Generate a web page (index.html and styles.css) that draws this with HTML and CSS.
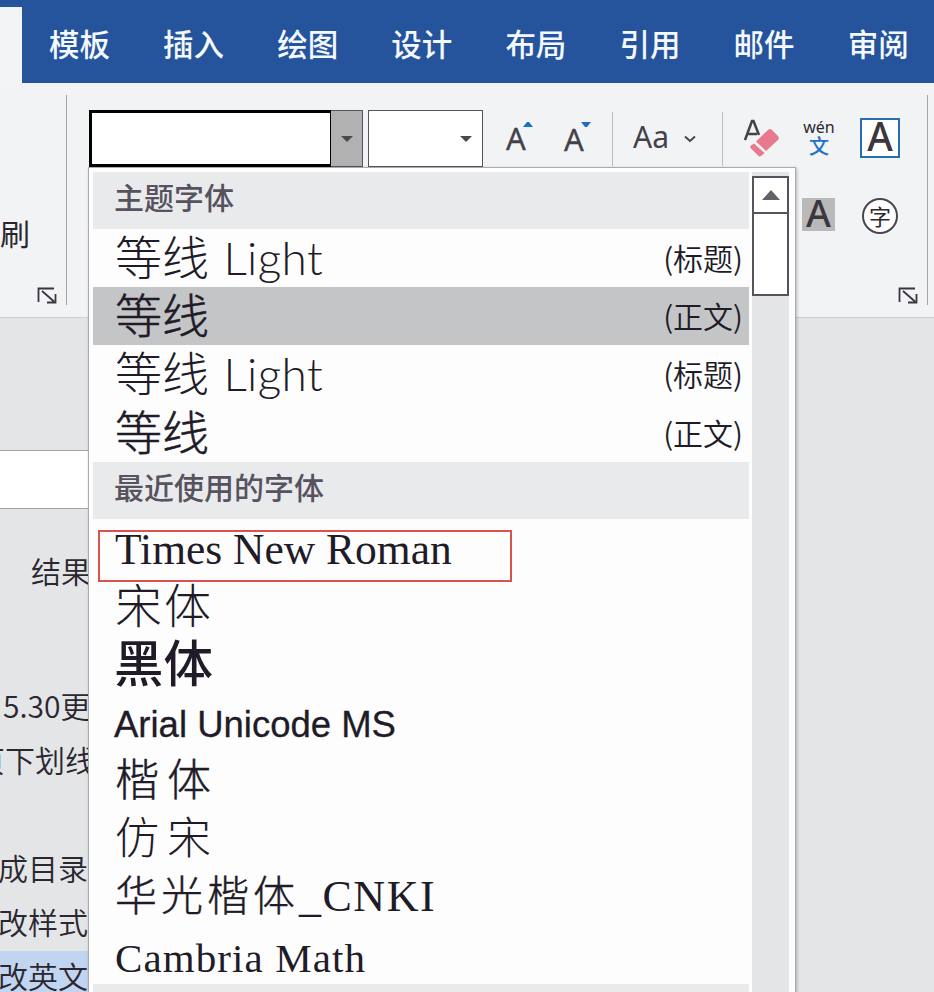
FILE: index.html
```html
<!DOCTYPE html>
<html lang="zh-CN">
<head>
  <meta charset="UTF-8">
  <meta name="viewport" content="width=device-width, initial-scale=1">
  <title>字体</title>
  <link rel="stylesheet" href="styles.css">
</head>
<body>
  <nav class="tabs">
    <div class="active-tab"></div>
    <span>模板</span>
    <span>插入</span>
    <span>绘图</span>
    <span>设计</span>
    <span>布局</span>
    <span>引用</span>
    <span>邮件</span>
    <span>审阅</span>
  </nav>

  <div class="ribbon">
    <div class="group clipboard">
      <span class="brush">刷</span>
      <svg class="launcher" width="20" height="17" viewBox="0 0 20 17"><path d="M1.500 15V1.500H17M5 4L17 14.500M18.500 7V15.500H10"/></svg>
    </div>
    <div class="group font">
      <div class="tools">
        <div class="combo name">
          <div class="field"></div>
          <div class="arrow"><svg width="12" height="6"><path d="M0 0H12L6 6Z"/></svg></div>
        </div>
        <div class="combo size"><svg width="12" height="6"><path d="M0 0H12L6 6Z"/></svg></div>
        <div class="letter grow">A<svg width="10" height="5"><path d="M0 5L4 0H6L10 5Z"/></svg></div>
        <div class="letter shrink">A<svg width="10" height="5"><path d="M0 0H10L6 5H4Z"/></svg></div>
        <div class="line"></div>
        <div class="case">Aa</div>
        <svg class="chevron" width="12" height="8" viewBox="0 0 12 8"><path d="M1 1.500L6 6L11 1.500"/></svg>
        <div class="line second"></div>
        <svg class="eraser" width="36" height="40" viewBox="0 0 36 40">
          <path class="a" d="M1 21L8 2H9.500L15 16M4 15H13"/>
          <path class="pink" d="M12 22.500L24 11Q26 9 28 11L34 17Q35.500 19 34 21L22 32Z"/>
          <path class="pink" d="M10 24.500L20.500 34L17 37Q15.500 38 14 36.500L7 29.500Q5.500 28 7 26.500Z"/>
        </svg>
        <div class="pinyin"><span>wén</span><b>文</b></div>
        <div class="boxed">A</div>
      </div>
      <div class="tools lower">
        <div class="shaded">A</div>
        <div class="circled">字</div>
      </div>
      <svg class="launcher" width="20" height="17" viewBox="0 0 20 17"><path d="M1.500 15V1.500H17M5 4L17 14.500M18.500 7V15.500H10"/></svg>
    </div>
  </div>

  <div class="work">
    <div class="search"></div>
    <div class="outline">
      <p class="result">结果</p>
      <p class="date">5.30更</p>
      <p class="under">页下划线</p>
      <p class="toc">成目录</p>
      <p>改样式</p>
      <p class="current">改英文</p>
    </div>
  </div>

  <!-- lista desplegable de fuentes -->
  <div class="menu">
    <div class="list">
      <h3>主题字体</h3>
      <div class="item light"><span>等线 <i>Light</i></span><em>(标题)</em></div>
      <div class="item deng selected"><span>等线</span><em>(正文)</em></div>
      <div class="item light"><span>等线 <i>Light</i></span><em>(标题)</em></div>
      <div class="item deng"><span>等线</span><em>(正文)</em></div>
      <h3>最近使用的字体</h3>
      <div class="item times"><span>Times New Roman</span></div>
      <div class="item song"><span>宋体</span></div>
      <div class="item hei"><span>黑体</span></div>
      <div class="item arial"><span>Arial Unicode MS</span></div>
      <div class="item kai"><span>楷体</span></div>
      <div class="item fang"><span>仿宋</span></div>
      <div class="item cnki"><span>华光楷体<i>_CNKI</i></span></div>
      <div class="item cambria"><span>Cambria Math</span></div>
      <h3></h3>
      <div class="mark"></div>
    </div>
    <div class="scrollbar">
      <div class="up"><svg width="18" height="10"><path d="M0 10L9 0L18 10Z"/></svg></div>
      <div class="thumb"></div>
    </div>
  </div>
</body>
</html>
```

FILE: styles.css
```css
* {
  box-sizing: border-box;
}
html {
  overflow: hidden;
}
body {
  margin: 0;
  width: 934px;
  height: 992px;
  overflow: hidden;
  position: relative;
  background: #e4e5e6;
  color: #2b2730;
  font-family: "Noto Sans CJK SC", sans-serif;
}
svg {
  display: block;
}
.tabs {
  display: flex;
  height: 83px;
  background: #25549c;
  color: #f4f8ff;
  font-size: 30.500px;
  font-weight: 500;
  line-height: 86px;
}
.tabs span {
  width: 61px;
  margin-right: 53.100px;
  flex: none;
}
.active-tab {
  width: 22px;
  margin: 7px 27px 0 0;
  background: #f3f4f5;
  flex: none;
}
.ribbon {
  display: flex;
  height: 235px;
  padding-top: 12px;
  background: #f2f3f5;
  border-bottom: 1px solid #cfd0d3;
}
.group {
  height: 210px;
  border-right: 1px solid #a4a2ac;
  position: relative;
}
.clipboard {
  width: 67px;
}
.brush {
  display: block;
  padding-top: 115px;
  font-size: 30px;
  line-height: 44px;
}
.launcher {
  position: absolute;
  right: 9px;
  bottom: 1px;
  fill: none;
  stroke: #3a3541;
  stroke-width: 1.800;
}
.font {
  width: 861px;
  padding: 15px 0 0 22px;
}
.tools {
  display: flex;
  height: 57px;
}
.combo {
  display: flex;
  height: 57px;
  flex: none;
}
.combo path {
  fill: #4b4850;
}
.name {
  width: 274px;
}
.field {
  flex: 1;
  background: #fff;
  border: 3px solid #000;
  border-right-width: 1px;
}
.arrow {
  width: 32px;
  background: #b1b1b2;
  border: 1px solid #57535d;
  border-left: 0;
  display: flex;
  align-items: center;
  justify-content: center;
}
.size {
  width: 115px;
  margin-left: 5px;
  background: #fff;
  border: 1px solid #57535d;
  align-items: center;
  justify-content: flex-end;
  padding-right: 10px;
}
.letter {
  position: relative;
  width: 24px;
  font: 31px/56px "Noto Sans", sans-serif;
  color: #454149;
  -webkit-text-stroke: 0.300px #454149;
}
.grow {
  margin-left: 23px;
}
.shrink {
  margin-left: 34px;
  padding-top: 1px;
}
.letter svg {
  position: absolute;
  left: 17px;
  top: 12px;
  fill: #1c6fc4;
}
.line {
  width: 1px;
  height: 54px;
  margin: 2px 0 0 24px;
  background: #bdbcc2;
}
.case {
  margin-left: 20px;
  width: 36px;
  font: 30px/54px "Noto Sans", sans-serif;
  color: #454149;
}
.chevron {
  margin: 25px 0 0 15px;
  fill: none;
  stroke: #454149;
  stroke-width: 1.800;
}
.second {
  margin-left: 26px;
}
.eraser {
  margin: 9px 0 0 21px;
}
.eraser .a {
  fill: none;
  stroke: #454149;
  stroke-width: 2.500;
}
.pink {
  fill: #e8798e;
}
.pinyin {
  width: 34px;
  margin-left: 22px;
  text-align: center;
}
.pinyin span {
  display: block;
  margin-top: 8px;
  font: 16px/18px "Noto Sans", sans-serif;
}
.pinyin b {
  display: block;
  font-size: 20px;
  line-height: 20px;
  font-weight: 500;
  color: #2270c4;
}
.boxed {
  width: 40px;
  height: 40px;
  margin: 8px 0 0 24px;
  border: 2px solid #286db4;
  background: #fff;
  text-align: center;
  font: 500 39px/31px "Noto Sans", sans-serif;
  color: #3b373d;
}
.lower {
  margin: 31px 0 0 713px;
}
.shaded {
  width: 33px;
  height: 33px;
  background: #b9b9ba;
  text-align: center;
  font: 500 38px/29px "Noto Sans", sans-serif;
  color: #3b373d;
}
.circled {
  width: 36px;
  height: 36px;
  margin-left: 27px;
  border: 2px solid #4a464f;
  border-radius: 50%;
  background: #fff;
  text-align: center;
  font-size: 22px;
  line-height: 30px;
}
.work {
  width: 89px;
  height: 674px;
  padding-top: 132px;
  overflow: hidden;
  white-space: nowrap;
}
.search {
  height: 59px;
  background: #fff;
  border: solid #a3a4a6;
  border-width: 1px 0;
}
.outline {
  margin-top: 37px;
}
.outline p {
  margin: 0;
  height: 54px;
  font-size: 30px;
  font-weight: 350;
  line-height: 49px;
}
.outline .result {
  padding-left: 31px;
}
.outline .date {
  margin-top: 81px;
  padding-left: 3px;
}
.outline .under {
  margin-left: -25px;
}
.outline .toc {
  margin-top: 54px;
}
.outline .toc, .outline .toc ~ p {
  text-indent: -2px;
}
.outline .current {
  background: #c1d4f0;
}
.menu {
  position: absolute;
  left: 88px;
  top: 167px;
  width: 708px;
  height: 825px;
  display: flex;
  padding: 4px 5px 0 4px;
  background: #fdfdfe;
  border: 1px solid #aaaab0;
  border-bottom: 0;
  box-shadow: 1px 1px 3px rgba(0,0,0,0.25);
  overflow: hidden;
}
.list {
  position: relative;
  width: 656px;
}
.list h3 {
  margin: 0;
  height: 57px;
  padding-left: 21px;
  background: #e9eaec;
  color: #56535f;
  font-size: 30px;
  font-weight: 500;
  line-height: 49px;
}
.item {
  display: flex;
  justify-content: space-between;
  height: 58.200px;
  padding: 0 6px 0 22px;
  font-size: 47px;
  line-height: 51px;
  white-space: nowrap;
  color: #211b28;
}
.item i {
  font-style: normal;
}
.item em {
  font-style: normal;
  font-size: 30px;
  font-weight: 350;
  line-height: 56px;
}
.light span {
  font-weight: 200;
}
.light i {
  margin-left: 4px;
  font-family: Lato, sans-serif;
  font-size: 46px;
  font-weight: 300;
  letter-spacing: 0.400px;
}
.deng span {
  font-weight: 300;
  -webkit-text-stroke: 0.500px #211b28;
}
.selected {
  background: #c4c5c7;
}
.times {
  font-family: "Liberation Serif", serif;
  font-size: 43.500px;
  line-height: 61px;
}
.song {
  font-weight: 300;
  letter-spacing: 2px;
}
.hei {
  padding-left: 21px;
  font-size: 49.500px;
  font-weight: 500;
  line-height: 51px;
}
.arial {
  padding-left: 21px;
  font-family: "Liberation Sans", sans-serif;
  font-size: 36.500px;
  line-height: 63px;
  -webkit-text-stroke: 0.300px #211b28;
}
.kai, .fang {
  font-size: 44px;
  font-weight: 300;
  letter-spacing: 8px;
  line-height: 51px;
}
.kai {
  -webkit-text-stroke: 0.400px #211b28;
}
.cnki {
  font-size: 42px;
  font-weight: 300;
  letter-spacing: 4px;
  line-height: 49px;
  -webkit-text-stroke: 0.400px #211b28;
}
.cnki i {
  font-family: "Liberation Serif", serif;
  font-size: 44px;
  letter-spacing: 1.500px;
  -webkit-text-stroke: 0;
}
.cambria {
  font-family: "Liberation Serif", serif;
  font-size: 41px;
  letter-spacing: 1.100px;
  line-height: 64px;
}
.mark {
  position: absolute;
  left: 5px;
  top: 358px;
  width: 414px;
  height: 52px;
  border: 2px solid #d9534f;
}
.scrollbar {
  width: 37px;
  margin-left: 3px;
  padding-top: 4px;
  background: #e4e5e7;
}
.up {
  height: 38px;
  display: flex;
  align-items: center;
  justify-content: center;
  background: #fff;
  border: 2px solid #57535d;
}
.up path {
  fill: #656169;
}
.thumb {
  height: 82px;
  background: #fff;
  border: 2px solid #57535d;
  border-top: 0;
}
```
